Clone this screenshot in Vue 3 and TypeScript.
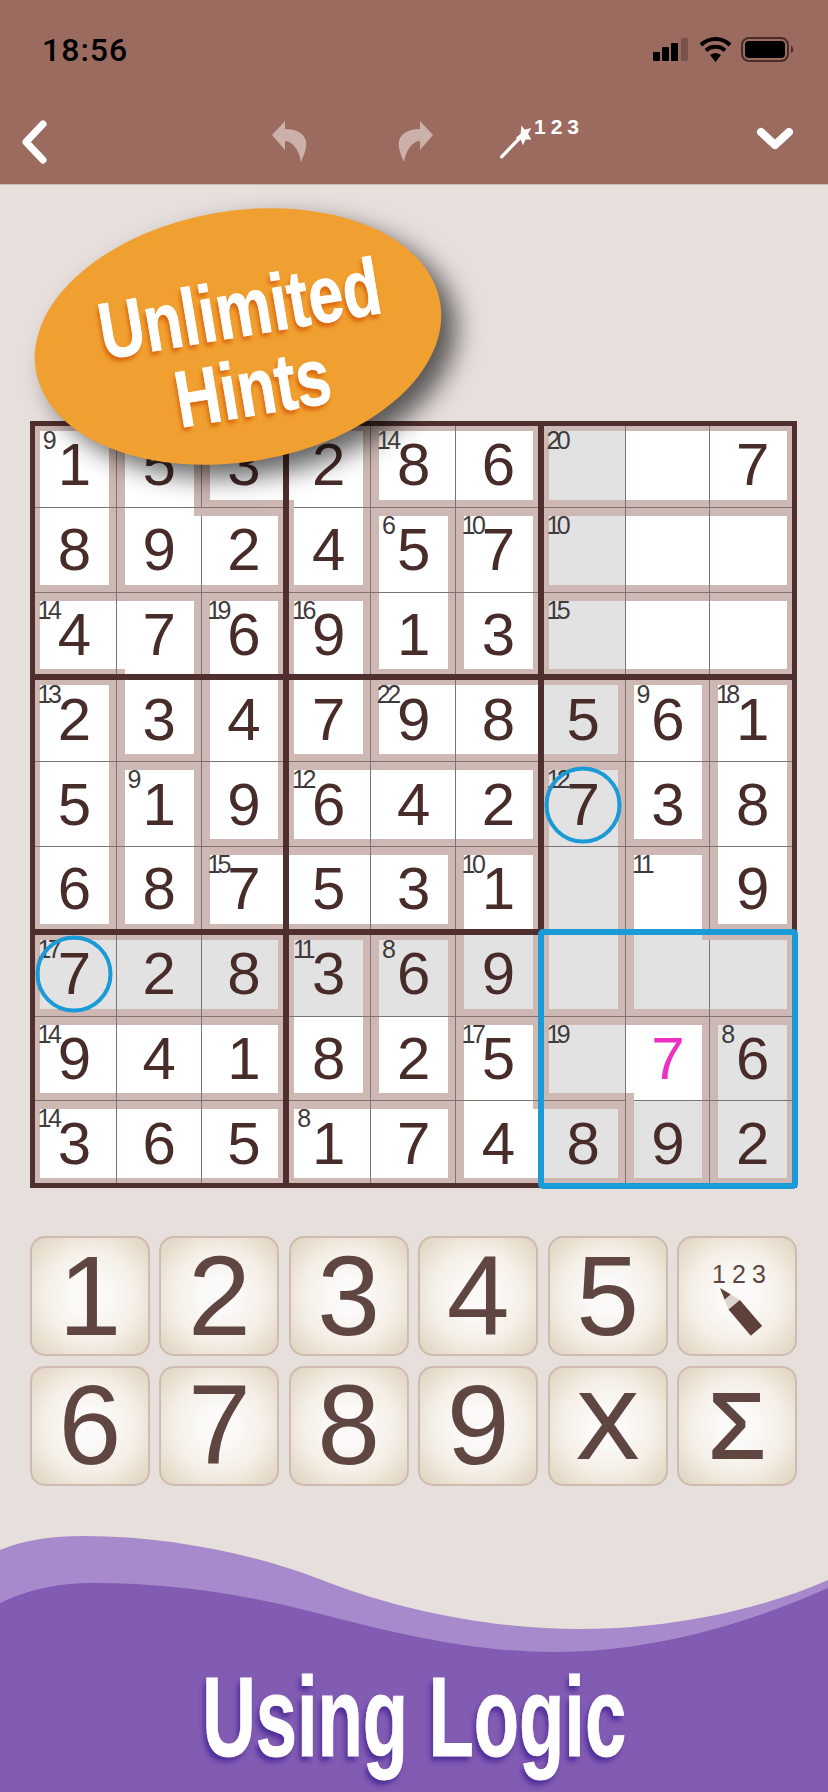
<script setup lang="ts">
import { computed } from 'vue'

defineOptions({
  name: 'KillerSudoku',
})

// cage id per cell
const cages = [
  'abccddeee',
  'abbcfghhh',
  'iijkfglll',
  'mijknnnop',
  'mqjrrrsop',
  'mqtttusvp',
  'wwwxyusvv',
  'zzzxyABBC',
  'DDDEEAABC',
]

const digits = [
  '153286..7',
  '892457...',
  '476913...',
  '234798561',
  '519642738',
  '687531..9',
  '728369...',
  '941825.76',
  '365174892',
]

const sums: Record<string, number> = {
  '0,0': 9, '0,4': 14, '0,6': 20, '1,4': 6, '1,5': 10, '1,6': 10,
  '2,0': 14, '2,2': 19, '2,3': 16, '2,6': 15, '3,0': 13, '3,4': 22,
  '3,7': 9, '3,8': 18, '4,1': 9, '4,3': 12, '4,6': 12, '5,2': 15,
  '5,5': 10, '5,7': 11, '6,0': 17, '6,3': 11, '6,4': 8, '7,0': 14,
  '7,5': 17, '7,6': 19, '7,8': 8, '8,0': 14, '8,3': 8,
}

function cageAt(r: number, c: number) {
  return cages[r]?.[c] ?? '#'
}

const cells = computed(() => {
  const out = []
  for (let r = 0; r < 9; r++) {
    for (let c = 0; c < 9; c++) {
      const id = cageAt(r, c)
      const same = (dr: number, dc: number) => cageAt(r + dr, c + dc) === id
      const notch = (dr: number, dc: number) => same(dr, 0) && same(0, dc) && !same(dr, dc)
      const corners: string[] = []
      if (notch(-1, -1)) corners.push('nw')
      if (notch(-1, 1)) corners.push('ne')
      if (notch(1, -1)) corners.push('sw')
      if (notch(1, 1)) corners.push('se')
      const ch = digits[r][c]
      out.push({
        key: `${r},${c}`,
        digit: ch === '.' ? '' : ch,
        sum: sums[`${r},${c}`],
        corners,
        circled: (r === 6 && c === 0) || (r === 4 && c === 6),
        classes: {
          bt: !same(-1, 0),
          bb: !same(1, 0),
          bl: !same(0, -1),
          br: !same(0, 1),
          grey: (r === 6 || c === 6 || (r > 5 && c > 5)) && !(r === 7 && c === 7),
          pink: r === 7 && c === 7,
        },
      })
    }
  }
  return out
})

const boxes = Array.from({ length: 9 }, (_, i) => i)
const keysTop = ['1', '2', '3', '4', '5']
const keysBottom = ['6', '7', '8', '9', 'X', 'Σ']
</script>

<template>
  <div class="page">
    <header class="head">
      <div class="status">
        <span class="time">18:56</span>
        <svg class="status-icons" width="142" height="26" viewBox="0 0 142 26">
          <rect x="0" y="15" width="7" height="9" rx="1" fill="#000" />
          <rect x="9" y="10" width="7" height="14" rx="1" fill="#000" />
          <rect x="18" y="6" width="7" height="18" rx="1" fill="#000" />
          <rect x="28" y="1" width="7" height="23" rx="1" fill="#000" opacity="0.22" />
          <path d="M48 8 C56 0 69 0 77 8 M53 13.5 C58 8.5 67 8.5 72 13.5" fill="none" stroke="#000" stroke-width="4" />
          <path d="M57 18 C60 15.5 65 15.5 68 18 L62.5 25 Z" fill="#000" />
          <rect x="89" y="1" width="46" height="23" rx="7" fill="none" stroke="#4a2c28" stroke-width="2" />
          <rect x="92" y="4" width="40" height="17" rx="4" fill="#000" />
          <path d="M138 9 C141 10 141 15 138 16 Z" fill="#4a2c28" />
        </svg>
      </div>
      <nav class="tools">
        <svg class="back" width="28" height="44" viewBox="0 0 28 44">
          <path d="M23 4 L6 22 L23 40" fill="none" stroke="#fff" stroke-width="7" stroke-linecap="round" stroke-linejoin="round" />
        </svg>
        <svg class="undo" width="36" height="42" viewBox="0 0 36 42">
          <path d="M13 0 L0 14 L13 29 V20 C20 20 27 28 29 41 C33 32 35 26 34 20 C32 12 24 8 13 8 Z" fill="#cbb1aa" />
        </svg>
        <svg class="redo" width="36" height="42" viewBox="0 0 36 42">
          <path d="M23 0 L36 14 L23 29 V20 C16 20 9 28 7 41 C3 32 1 26 2 20 C4 12 12 8 23 8 Z" fill="#cbb1aa" />
        </svg>
        <div class="wand">
          <svg width="40" height="40" viewBox="0 0 40 40">
            <path d="M2 38 L28 11" stroke="#fff" stroke-width="4" stroke-linecap="round" />
            <path d="M26 0 L30 5 L38 3 L34 10 L38 17 L31 17 L28 24 L25 17 L19 15 L25 10 Z" fill="#fff" />
          </svg>
          <span class="wand-nums">123</span>
        </div>
        <svg class="down" width="38" height="24" viewBox="0 0 38 24">
          <path d="M5 5 L19 18 L33 5" fill="none" stroke="#fff" stroke-width="8" stroke-linecap="round" stroke-linejoin="round" />
        </svg>
      </nav>
    </header>

    <main class="content">
      <div class="board">
        <div v-for="cell in cells" :key="cell.key" class="cell" :class="cell.classes">
          <i v-for="corner in cell.corners" :key="corner" class="notch" :class="corner" />
          <span v-if="cell.sum" class="sum">{{ cell.sum }}</span>
          <span class="digit">{{ cell.digit }}</span>
          <span v-if="cell.circled" class="circle" />
        </div>
        <div class="boxes">
          <div v-for="b in boxes" :key="b" class="box" />
        </div>
        <div class="active-box" />
      </div>

      <div class="keypad">
        <button v-for="k in keysTop" :key="k" class="key">{{ k }}</button>
        <button class="key">
          <svg width="116" height="116" viewBox="0 0 116 116">
            <text x="33" y="45" class="pencil-nums">1</text>
            <text x="53" y="45" class="pencil-nums">2</text>
            <text x="73" y="45" class="pencil-nums">3</text>
            <path d="M41 50 L51.9 56.5 L45.7 61.8 Z" fill="#5e4038" />
            <path d="M51.9 56.5 L60.9 62 L49.5 71.6 L45.7 61.8 Z" fill="#ddd5d0" />
            <path d="M60.9 62 L83.2 88.1 L71.8 97.8 L49.5 71.6 Z" fill="#5e4038" />
          </svg>
        </button>
        <button v-for="k in keysBottom" :key="k" class="key" :class="{ sym: k === 'X' || k === 'Σ' }">{{ k }}</button>
      </div>

      <div class="oval">
        <span class="oval-line">Unlimited</span>
        <span class="oval-line">Hints</span>
      </div>
    </main>

    <footer class="foot">
      <svg class="waves" width="828" height="262" viewBox="0 1530 828 262" preserveAspectRatio="none">
        <path d="M0 1550 C25 1540 50 1536 84 1536 C170 1536 260 1555 327 1582 C400 1610 490 1629 581 1629 C670 1629 760 1610 828 1580 V1792 H0 Z" fill="#a78acb" />
        <path d="M0 1603 C28 1590 55 1583 95 1583 C170 1583 250 1595 317 1613 C390 1632 470 1652 554 1652 C650 1652 745 1625 828 1588 V1792 H0 Z" fill="#825bb3" />
      </svg>
      <span class="logic">Using Logic</span>
    </footer>
  </div>
</template>

<style scoped>
.page {
  position: relative;
  display: flex;
  flex-direction: column;
  width: 828px;
  height: 1792px;
  overflow: hidden;
  background: #e7dfdc;
  font-family: "Liberation Sans", Arial, sans-serif;
}

/* --- header --- */
.head {
  height: 185px;
  padding: 0 33px 0 20px;
  box-sizing: border-box;
  background: #9b6b60;
  border-bottom: 1px solid #cdbcb6;
}

.status {
  display: flex;
  justify-content: space-between;
  align-items: flex-start;
  height: 118px;
  padding: 32px 0 0 22px;
  box-sizing: border-box;
}

.time {
  font-family: Roboto, "Liberation Sans", sans-serif;
  font-size: 32px;
  font-weight: 500;
  line-height: 36px;
  letter-spacing: 1px;
  color: #000;
}

.status-icons {
  margin-top: 5px;
}

.tools {
  display: flex;
  align-items: center;
  height: 48px;
}

.back { margin-right: 224px; }
.undo { margin-right: 89px; }
.redo { margin-right: 67px; }

.wand {
  display: flex;
  align-items: flex-start;
  width: 84px;
}

.wand-nums {
  margin: -7px 0 0 1px;
  font-size: 21px;
  font-weight: 700;
  line-height: 24px;
  letter-spacing: 5px;
  color: #fff;
}

.down {
  margin-left: 172px;
  margin-top: -6px;
}

/* --- board --- */
.content {
  position: relative;
  padding: 238px 0 0 32px;
}

.board {
  position: relative;
  display: grid;
  grid-template-columns: repeat(9, 84.8px);
  grid-template-rows: repeat(9, 84.8px);
  width: 763.2px;
}

.cell {
  --t: 0px;
  --r: 0px;
  --b: 0px;
  --l: 0px;
  position: relative;
  display: flex;
  align-items: center;
  justify-content: center;
  background: #fff;
  box-shadow:
    inset -1px 0 0 #7f7371,
    inset 0 -1px 0 #7f7371,
    inset 0 var(--t) 0 #cdb8b3,
    inset 0 calc(var(--b) * -1) 0 #cdb8b3,
    inset var(--l) 0 0 #cdb8b3,
    inset calc(var(--r) * -1) 0 0 #cdb8b3;
}

.bt { --t: 8px; }
.br { --r: 8px; }
.bb { --b: 8px; }
.bl { --l: 8px; }

.grey { background: #e2e2e2; }

.notch {
  position: absolute;
  width: 8px;
  height: 8px;
  background: #cdb8b3;
}

.nw { top: 0; left: 0; }
.ne { top: 0; right: 0; }
.sw { bottom: 0; left: 0; }
.se { bottom: 0; right: 0; }

.digit {
  position: relative;
  font-size: 60px;
  line-height: 60px;
  color: #472c2a;
}

.pink .digit { color: #ee2fc0; }

.sum {
  position: absolute;
  z-index: 1;
  top: 5px;
  left: 16px;
  transform: translateX(-50%);
  font-size: 25px;
  line-height: 25px;
  letter-spacing: -3.5px;
  color: #3f3a3a;
}

.circle {
  position: absolute;
  z-index: 2;
  top: 50%;
  left: 50%;
  width: 77px;
  height: 77px;
  box-sizing: border-box;
  border: 4px solid #1a9ad6;
  border-radius: 50%;
  transform: translate(-50%, -50%);
}

.boxes {
  position: absolute;
  inset: 0;
  display: grid;
  grid-template-columns: repeat(3, 1fr);
  grid-template-rows: repeat(3, 1fr);
  pointer-events: none;
}

.box {
  outline: 5px solid #4f2f2d;
  outline-offset: -3px;
}

.active-box {
  position: absolute;
  right: 0;
  bottom: 0;
  width: 254.4px;
  height: 254.4px;
  outline: 6px solid #1a9ad6;
  outline-offset: -3px;
  border-radius: 2px;
}

/* --- keypad --- */
.keypad {
  display: grid;
  grid-template-columns: repeat(6, 120px);
  grid-auto-rows: 120px;
  gap: 9.4px;
  margin: 50px 0 0 -2px;
}

.key {
  display: flex;
  align-items: center;
  justify-content: center;
  padding: 0;
  box-sizing: border-box;
  border: 2px solid #d0bbb0;
  border-radius: 15px;
  background: radial-gradient(circle at 50% 50%, #fbfaf8 22%, #f4eee5 58%, #dfd2bd 100%);
  font-family: "Liberation Sans", Arial, sans-serif;
  font-size: 113px;
  line-height: 1;
  color: #5f4641;
}

.key.sym {
  font-size: 92px;
  -webkit-text-stroke: 2px #5f4641;
}

.pencil-nums {
  font-family: "Liberation Sans", Arial, sans-serif;
  font-size: 25px;
  fill: #5f4641;
}

/* --- oval --- */
.oval {
  position: absolute;
  top: 26px;
  left: 33px;
  display: flex;
  flex-direction: column;
  align-items: center;
  justify-content: center;
  width: 410px;
  height: 251px;
  padding: 26px 0 0 12px;
  box-sizing: border-box;
  border-radius: 50%;
  background: #f0a030;
  box-shadow: 13px 15px 26px rgba(0, 0, 0, 0.62);
  transform: rotate(-9.5deg);
}

.oval-line {
  display: block;
  font-size: 80px;
  font-weight: 700;
  line-height: 80px;
  color: #fff;
  -webkit-text-stroke: 1px #fff;
  text-shadow: -3px 4px 5px #d9640f;
  transform: scaleX(0.78);
}

/* --- footer --- */
.foot {
  position: absolute;
  left: 0;
  right: 0;
  bottom: 0;
  display: flex;
  justify-content: center;
  align-items: flex-end;
  height: 262px;
}

.waves {
  position: absolute;
  inset: 0;
}

.logic {
  position: relative;
  margin-bottom: 10px;
  font-size: 114px;
  font-weight: 700;
  line-height: 130px;
  white-space: nowrap;
  color: #fff;
  -webkit-text-stroke: 1px #fff;
  text-shadow: -4px 5px 6px #4f2f9a;
  transform: scaleX(0.65);
}
</style>

<style>
html,
body {
  margin: 0;
  background: #e7dfdc;
}
</style>
